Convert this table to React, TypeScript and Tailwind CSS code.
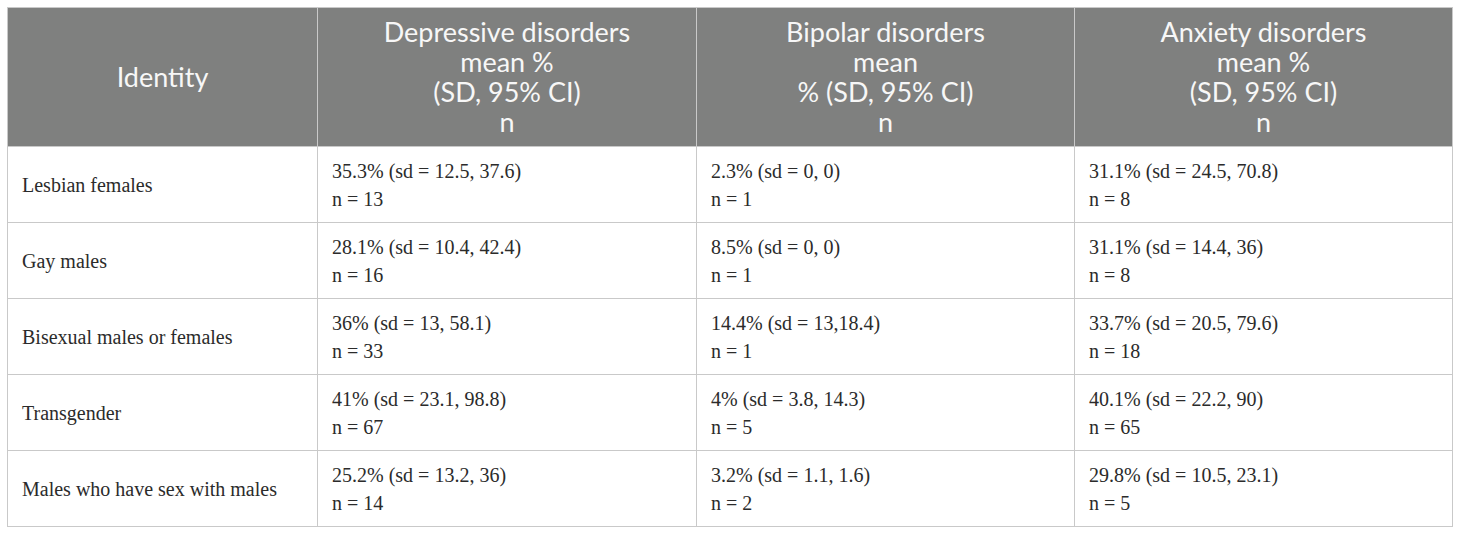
const rows: { identity: string; cells: [string, string][] }[] = [
  {
    identity: "Lesbian females",
    cells: [
      ["35.3% (sd = 12.5, 37.6)", "n = 13"],
      ["2.3% (sd = 0, 0)", "n = 1"],
      ["31.1% (sd = 24.5, 70.8)", "n = 8"],
    ],
  },
  {
    identity: "Gay males",
    cells: [
      ["28.1% (sd = 10.4, 42.4)", "n = 16"],
      ["8.5% (sd = 0, 0)", "n = 1"],
      ["31.1% (sd = 14.4, 36)", "n = 8"],
    ],
  },
  {
    identity: "Bisexual males or females",
    cells: [
      ["36% (sd = 13, 58.1)", "n = 33"],
      ["14.4% (sd = 13,18.4)", "n = 1"],
      ["33.7% (sd = 20.5, 79.6)", "n = 18"],
    ],
  },
  {
    identity: "Transgender",
    cells: [
      ["41% (sd = 23.1, 98.8)", "n = 67"],
      ["4% (sd = 3.8, 14.3)", "n = 5"],
      ["40.1% (sd = 22.2, 90)", "n = 65"],
    ],
  },
  {
    identity: "Males who have sex with males",
    cells: [
      ["25.2% (sd = 13.2, 36)", "n = 14"],
      ["3.2% (sd = 1.1, 1.6)", "n = 2"],
      ["29.8% (sd = 10.5, 23.1)", "n = 5"],
    ],
  },
];

const headers: string[][] = [
  ["Depressive disorders", "mean %", "(SD, 95% CI)", "n"],
  ["Bipolar disorders", "mean", "% (SD, 95% CI)", "n"],
  ["Anxiety disorders", "mean %", "(SD, 95% CI)", "n"],
];

export default function App() {
  return (
    <div className="min-h-screen bg-white p-[7px]">
      <table className="w-[1445px] table-fixed border-collapse border border-[#c9c9c9]">
        <colgroup>
          <col className="w-[310px]" />
          <col className="w-[379px]" />
          <col className="w-[378px]" />
          <col className="w-[378px]" />
        </colgroup>
        <thead>
          <tr className="h-[139px] bg-[#7f807f] text-[#f7f7f7] font-['Lato',sans-serif] text-[27px] leading-[30px]">
            <th className="border border-[#c9c9c9] text-center font-normal">Identity</th>
            {headers.map((lines, i) => (
              <th key={i} className="border border-[#c9c9c9] text-center font-normal">
                {lines.map((l, j) => (
                  <div key={j}>{l}</div>
                ))}
              </th>
            ))}
          </tr>
        </thead>
        <tbody className="font-['Liberation_Serif',serif] text-[20px] leading-[28px] text-[#2b2b2b]">
          {rows.map((r) => (
            <tr key={r.identity} className="h-[76px]">
              <td className="border border-[#c9c9c9] px-[14px] align-middle">{r.identity}</td>
              {r.cells.map(([a, b], i) => (
                <td key={i} className="border border-[#c9c9c9] px-[14px] align-middle">
                  <div>{a}</div>
                  <div>{b}</div>
                </td>
              ))}
            </tr>
          ))}
        </tbody>
      </table>
    </div>
  );
}
